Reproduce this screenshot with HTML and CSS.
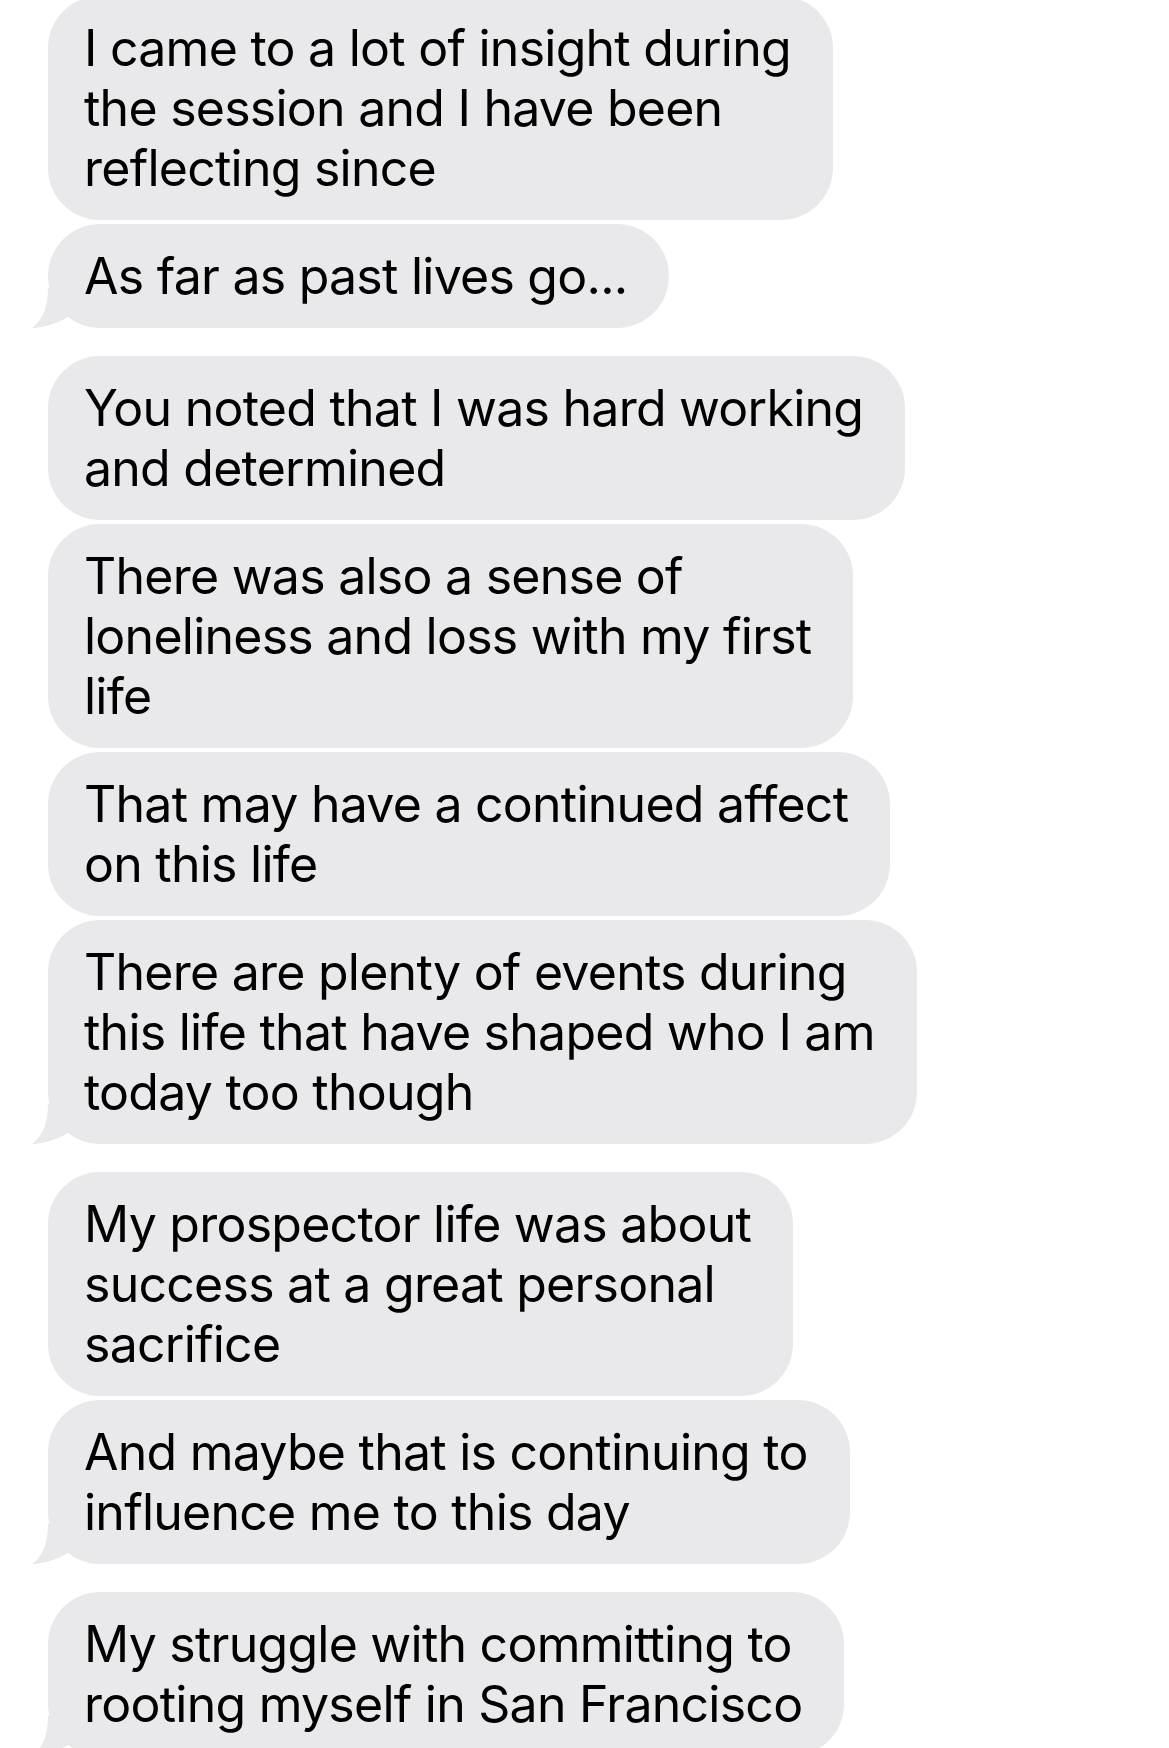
FILE: index.html
```html
<!DOCTYPE html>
<html lang="en">
<head>
    <meta charset="UTF-8">
    <meta name="viewport" content="width=device-width, initial-scale=1.0">
    <title>Messages</title>
    <link rel="stylesheet" href="styles.css">
</head>
<body>
    <div class="thread">
        <div class="group">
            <div class="bubble">I came to a lot of insight during<br>the session and I have been<br>reflecting since</div>
            <div class="bubble tail">As far as past lives go...
                <svg class="tail-shape" viewBox="0 0 60 40" width="60" height="40"><path d="M16 0 C16 20 10 33 0 40 C10 40 24 36 36 29 L60 0 Z"/></svg>
            </div>
        </div>

        <div class="group">
            <div class="bubble">You noted that I was hard working<br>and determined</div>
            <div class="bubble">There was also a sense of<br>loneliness and loss with my first<br>life</div>
            <div class="bubble">That may have a continued affect<br>on this life</div>
            <div class="bubble tail">There are plenty of events during<br>this life that have shaped who I am<br>today too though
                <svg class="tail-shape" viewBox="0 0 60 40" width="60" height="40"><path d="M16 0 C16 20 10 33 0 40 C10 40 24 36 36 29 L60 0 Z"/></svg>
            </div>
        </div>

        <div class="group">
            <div class="bubble">My prospector life was about<br>success at a great personal<br>sacrifice</div>
            <div class="bubble tail">And maybe that is continuing to<br>influence me to this day
                <svg class="tail-shape" viewBox="0 0 60 40" width="60" height="40"><path d="M16 0 C16 20 10 33 0 40 C10 40 24 36 36 29 L60 0 Z"/></svg>
            </div>
        </div>

        <div class="group">
            <div class="bubble tail">My struggle with committing to<br>rooting myself in San Francisco
                <svg class="tail-shape" viewBox="0 0 60 40" width="60" height="40"><path d="M16 0 C16 20 10 33 0 40 C10 40 24 36 36 29 L60 0 Z"/></svg>
            </div>
        </div>
    </div>
</body>
</html>
```

FILE: styles.css
```css
body {
    margin: 0;
    background-color: #ffffff;
    font-family: Inter, "Noto Sans", sans-serif;
    color: #000000;
    overflow: hidden;
}

.thread {
    display: flex;
    flex-direction: column;
    gap: 28px;
    padding-left: 48px;
    margin-top: -4px;
}

.group {
    display: flex;
    flex-direction: column;
    align-items: flex-start;
    gap: 4px;
}

/* Grey received bubble */
.bubble {
    position: relative;
    isolation: isolate;
    background-color: #e9e9eb;
    border-radius: 52px;
    padding: 22px 42px 22px 36px;
    font-size: 50px;
    line-height: 60px;
    letter-spacing: -0.75px;
    white-space: nowrap;
}

/* little tail under the last bubble of a group */
.tail-shape {
    position: absolute;
    left: -16px;
    bottom: 0;
    z-index: -1;
    fill: #e9e9eb;
    overflow: visible;
}
```
